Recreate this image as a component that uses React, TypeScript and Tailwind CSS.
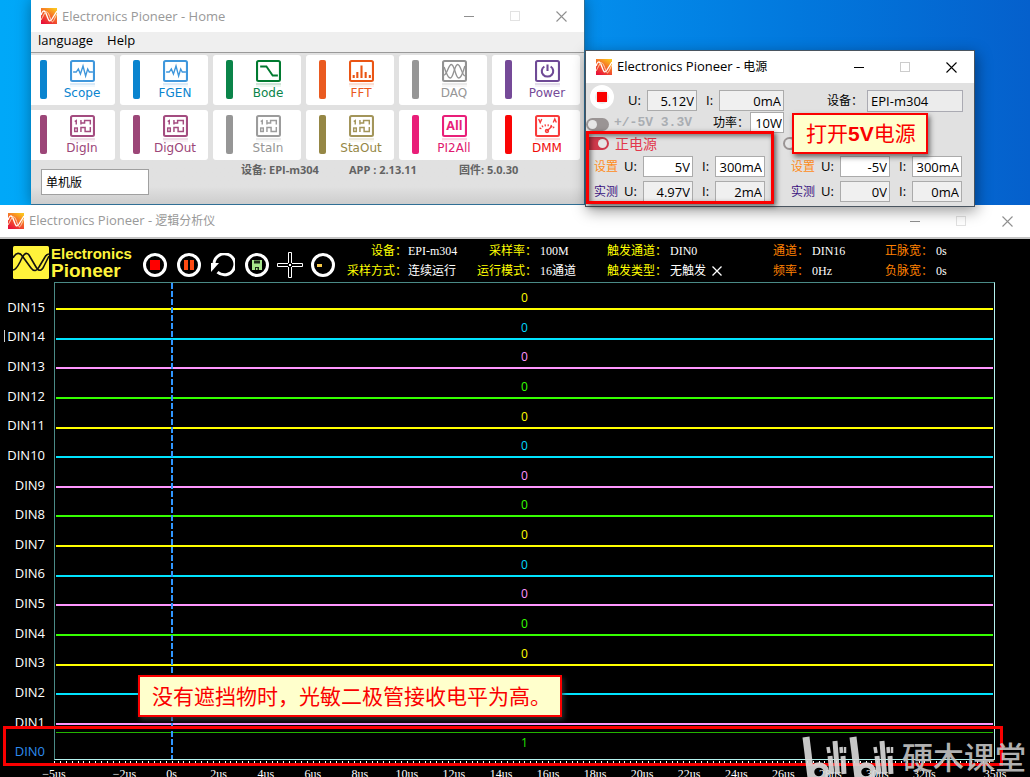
import type { ReactNode } from "react";

const UI = "font-['Open_Sans','Noto_Sans_CJK_SC',sans-serif]";
const BITMAP = "font-['Liberation_Serif','Noto_Sans_CJK_SC',serif]";

function AppIcon() {
  return (
    <svg width="16" height="16" viewBox="0 0 16 16" aria-hidden="true">
      <defs>
        <linearGradient id="appGradient" x1="0.8" y1="0" x2="0.2" y2="1">
          <stop offset="0" stopColor="#fcc41c" />
          <stop offset="0.5" stopColor="#f4622a" />
          <stop offset="1" stopColor="#e8103a" />
        </linearGradient>
      </defs>
      <rect width="16" height="16" fill="url(#appGradient)" />
      <path d="M0 7 C2 1 4 2 6 8 S9 14 11 11 L16 3" fill="none" stroke="#fff" strokeWidth="1.3" />
      <path d="M0 12 C2 9 3 5 5 4 S8 7 10 12 S13 11 16 6" fill="none" stroke="#ffd9b8" strokeWidth="1" />
    </svg>
  );
}

function WindowButtons({ muted }: { muted?: boolean }) {
  const tone = muted ? "text-[#8f8f8f]" : "text-black";
  return (
    <div className={`flex ${tone}`}>
      <button type="button" aria-label="Minimize" className="flex h-8 w-[46px] items-center justify-center">
        <svg width="11" height="11" viewBox="0 0 11 11"><path d="M0 5.5H10" stroke="currentColor" /></svg>
      </button>
      <button type="button" aria-label="Maximize" className="flex h-8 w-[46px] items-center justify-center">
        <svg width="11" height="11" viewBox="0 0 11 11"><rect x="0.5" y="0.5" width="9" height="9" fill="none" stroke={muted ? "#e2e2e2" : "#cccccc"} /></svg>
      </button>
      <button type="button" aria-label="Close" className="flex h-8 w-[46px] items-center justify-center">
        <svg width="11" height="11" viewBox="0 0 11 11"><path d="M0.5 0.5L10.5 10.5M10.5 0.5L0.5 10.5" stroke="currentColor" strokeWidth="1.1" /></svg>
      </button>
    </div>
  );
}

function TitleBar({ title, local, muted, inset }: { title: string; local?: string; muted?: boolean; inset: string }) {
  return (
    <header className={`flex h-8 shrink-0 items-center justify-between bg-white ${inset}`}>
      <div className="flex items-center gap-[5px]">
        <AppIcon />
        <h1 className={`pb-px text-[13px] leading-4 whitespace-nowrap ${muted ? "text-[#999999]" : "text-black"}`}>
          {title}
          {local && <span className="text-[12px]"> {local}</span>}
        </h1>
      </div>
      <WindowButtons muted={muted} />
    </header>
  );
}

const glyphs: Record<string, ReactNode> = {
  wave: <path d="M3 12H6L8 9L10 14L12.5 6L15 16L17 9L18.5 12H22" strokeWidth="1.3" />,
  bode: <path d="M4 6.5H10L16 15.5H21" strokeWidth="1.8" />,
  fft: <path d="M4.5 18V15M8 18V12M12 18V5.5M16 18V12M20 18V15" strokeWidth="2" />,
  daq: (
    <g strokeWidth="1.3">
      <path d="M2 15C5 15 6 4.500 9 4.500S13 18 16 18S20 12 22 6" />
      <path d="M2 7C4 12 5 18 8 18S12 4.500 15 4.500S19 15 22 16" />
    </g>
  ),
  power: (
    <g strokeWidth="2">
      <path d="M9 6.500A5.500 5.500 0 1 0 15 6.500" />
      <path d="M12 4.500V11" />
    </g>
  ),
  logic: (
    <g strokeWidth="1.4">
      <path d="M4.500 6.500L6 5.500V9.500M10.500 5V9.500M10.500 8H14V5.500H19.500V9.500M10.500 17V12.500H14.500V16.500H19.500V12" />
      <rect x="4.500" y="13" width="2.500" height="3.500" />
    </g>
  ),
  dmm: (
    <g strokeWidth="1.3">
      <path d="M3.500 4L5 7.500L6.500 4M17.500 7.500L19 4L20.500 7.500" />
      <path d="M5 14C7 9 16 9 19 14" strokeWidth="2" strokeDasharray="1.200 1.600" />
      <path d="M11 16.500L16.500 11" />
      <circle cx="11.500" cy="16" r="1.500" />
    </g>
  ),
};

interface Tool { name: string; glyph: string; color: string; bar: string; text: string }

const tools: Tool[] = [
  { name: "Scope", glyph: "wave", color: "#3f97dc", bar: "bg-[#0a84cf]", text: "text-[#0a84cf]" },
  { name: "FGEN", glyph: "wave", color: "#3f97dc", bar: "bg-[#0a84cf]", text: "text-[#0a84cf]" },
  { name: "Bode", glyph: "bode", color: "#007a30", bar: "bg-[#0a8449]", text: "text-[#0a8449]" },
  { name: "FFT", glyph: "fft", color: "#ea5514", bar: "bg-[#ea5a20]", text: "text-[#ea5a20]" },
  { name: "DAQ", glyph: "daq", color: "#929292", bar: "bg-[#969696]", text: "text-[#969696]" },
  { name: "Power", glyph: "power", color: "#6f4a96", bar: "bg-[#754a98]", text: "text-[#754a98]" },
  { name: "DigIn", glyph: "logic", color: "#a44c80", bar: "bg-[#9c4678]", text: "text-[#9c4678]" },
  { name: "DigOut", glyph: "logic", color: "#a44c80", bar: "bg-[#9c4678]", text: "text-[#9c4678]" },
  { name: "StaIn", glyph: "logic", color: "#9c9c9c", bar: "bg-[#969696]", text: "text-[#969696]" },
  { name: "StaOut", glyph: "logic", color: "#a3955a", bar: "bg-[#958745]", text: "text-[#958745]" },
  { name: "PI2All", glyph: "all", color: "#e91e79", bar: "bg-[#e91e79]", text: "text-[#e0186f]" },
  { name: "DMM", glyph: "dmm", color: "#f83a3a", bar: "bg-[#fa0505]", text: "text-[#f00a0a]" },
];

function ToolTile({ tool }: { tool: Tool }) {
  return (
    <button type="button" className="flex h-[50px] items-start rounded-[3px] bg-white pt-[5px] pl-[13px]">
      <span className={`h-[39px] w-[7px] shrink-0 rounded-[2px] ${tool.bar}`} />
      <span className="flex flex-1 flex-col items-center pl-[2px]">
        <svg width="25" height="28" viewBox="0 0 24 28" preserveAspectRatio="none" fill="none" stroke={tool.color} aria-hidden="true">
          <rect x="1" y="1" width="22" height="20" rx="1.500" strokeWidth="2" />
          {tool.glyph === "all" ? (
            <text x="12" y="15.500" textAnchor="middle" fontSize="12" fontWeight="700" fontFamily="Open Sans, sans-serif" fill={tool.color} stroke="none">All</text>
          ) : (
            glyphs[tool.glyph]
          )}
          <rect x="0" y="23" width="24" height="2" fill={tool.color} stroke="none" opacity="0.2" />
          <rect x="0" y="25" width="24" height="2" fill={tool.color} stroke="none" opacity="0.07" />
        </svg>
        <span className={`-mt-[2px] font-['DejaVu_Sans',sans-serif] text-[12px] leading-[15px] ${tool.text}`}>{tool.name}</span>
      </span>
    </button>
  );
}

function HomeWindow() {
  return (
    <section aria-label="Home" className="absolute top-0 left-[31px] h-[205px] w-[554px] overflow-hidden border-r border-b border-[#2f6f95] bg-[#e1e1e1] shadow-[0_0_14px_rgba(0,0,0,0.35)]">
      <TitleBar title="Electronics Pioneer - Home" muted inset="pl-[10px]" />
      <nav className="flex h-[21px] items-start gap-[14px] border-b border-[#9a9a9a] bg-[#efefef] px-[7px] text-[13px] leading-4 text-black">
        <button type="button">language</button>
        <button type="button">Help</button>
      </nav>
      <div className="mt-[2px] mr-1 -ml-1 grid grid-cols-6 gap-[5px]">
        {tools.map((tool) => (
          <ToolTile key={tool.name} tool={tool} />
        ))}
      </div>
      <div className="flex h-11 items-start bg-linear-to-b from-[#e1e1e1] from-60% to-[#cdcdcd] pl-[10px]">
        <input aria-label="Edition" defaultValue="单机版" className="mt-[9px] h-[26px] w-[108px] border border-[#a0a0a0] bg-white px-1 text-[12px] text-black" />
        <p className="ml-[92px] flex gap-[30px] pt-[2px] text-[11px] leading-4 font-bold whitespace-nowrap text-[#636363]">
          <span>设备: EPI-m304</span>
          <span>APP : 2.13.11</span>
          <span className="ml-3">固件: 5.0.30</span>
        </p>
      </div>
    </section>
  );
}

function Reading({ id, label, value, width, editable }: { id: string; label: string; value: string; width: string; editable?: boolean }) {
  return (
    <div className="flex items-center gap-[6px]">
      <label htmlFor={id} className="text-[13px] whitespace-nowrap">{label}</label>
      <input id={id} defaultValue={value} readOnly={!editable} className={`h-[21px] border border-[#ababab] pr-[2px] text-right text-[13px] ${width} ${editable ? "bg-white" : "bg-[#f0f0f0]"}`} />
    </div>
  );
}

function Toggle({ id, on }: { id: string; on?: boolean }) {
  return (
    <input
      id={id}
      type="checkbox"
      defaultChecked={on}
      className="flex h-[13px] w-[23px] appearance-none items-center rounded-full bg-[#9a9494] px-[2px] before:size-[9px] before:rounded-full before:bg-[#e6e6e6] checked:justify-end checked:rounded-l-none checked:bg-[#cf3a4c]"
    />
  );
}

function Supply({ id, name, on, rows }: { id: string; name?: string; on?: boolean; rows: string[][] }) {
  return (
    <fieldset className="w-[197px] shrink-0">
      <div className="flex h-[21px] items-center gap-[6px]">
        <Toggle id={id} on={on} />
        {name && <label htmlFor={id} className="text-[14px] leading-4 text-[#e2384c]">{name}</label>}
      </div>
      <div className="mt-[2px] flex flex-col gap-1 pl-2">
        {rows.map(([label, volts, amps], i) => (
          <div key={label} className="flex items-center">
            <span className={`mr-[6px] text-[12px] ${i === 0 ? "text-[#ff8c1a]" : "text-[#3a1280]"}`}>{label}</span>
            <div className="w-[78px]"><Reading id={`${id}-u${i}`} label="U:" value={volts} width="w-[50px]" editable={i === 0} /></div>
            <Reading id={`${id}-i${i}`} label="I:" value={amps} width="w-[50px]" editable={i === 0} />
          </div>
        ))}
      </div>
    </fieldset>
  );
}

function Callout({ children, place }: { children: ReactNode; place: string }) {
  return (
    <p className={`absolute flex items-center border-2 border-[#fa0000] bg-[#ffffcc] px-3 font-['Liberation_Sans','Noto_Sans_CJK_SC',sans-serif] text-[21px] leading-none whitespace-nowrap text-[#fa0000] shadow-[2px_3px_5px_rgba(60,60,60,0.7)] ${place}`}>
      {children}
    </p>
  );
}

function PowerWindow() {
  return (
    <section aria-label="电源" className="absolute top-[50px] left-[585px] h-[157px] w-[390px] border border-[#4a5560] bg-[#e1e1e1] text-black shadow-[2px_4px_14px_rgba(0,0,0,0.4)]">
      <TitleBar title="Electronics Pioneer -" local="电源" inset="pl-[10px]" />
      <div className="flex items-start pt-[2px] pl-1">
        <button type="button" aria-label="Stop" className="flex size-6 items-center justify-center rounded-full border-[5px] border-white bg-[#ececec]">
          <span className="size-[10px] shrink-0 bg-[#fa0000]" />
        </button>
        <div className="mt-[5px] ml-[14px] flex">
          <div className="w-[78px]"><Reading id="in-u" label="U:" value="5.12V" width="w-[50px]" /></div>
          <Reading id="in-i" label="I:" value="0mA" width="w-[65px]" />
        </div>
        <div className="mt-[5px] ml-[43px] flex items-center gap-1">
          <label htmlFor="device" className="text-[12px] whitespace-nowrap">设备：</label>
          <input id="device" readOnly defaultValue="EPI-m304" className="h-[22px] w-24 border border-[#aaaab2] bg-[#ececec] px-[3px] text-[13px]" />
        </div>
      </div>
      <div className="flex h-[21px] items-center">
        <span className="pt-1"><Toggle id="rail" /></span>
        <label htmlFor="rail" className="ml-[5px] font-['Liberation_Mono',monospace] text-[13px] font-bold whitespace-nowrap text-[#a9adb2]">+/-5V 3.3V</label>
        <label htmlFor="watts" className="ml-[21px] text-[12px] whitespace-nowrap">功率：</label>
        <input id="watts" defaultValue="10W" className="ml-px h-[21px] w-[34px] border border-[#ababab] bg-white pr-px text-right text-[13px]" />
      </div>
      <div className="flex">
        <Supply id="positive" name="正电源" on rows={[["设置", "5V", "300mA"], ["实测", "4.97V", "2mA"]]} />
        <Supply id="negative" rows={[["设置", "-5V", "300mA"], ["实测", "0V", "0mA"]]} />
      </div>
      <div className="pointer-events-none absolute top-[80px] left-0 h-[73px] w-[188px] border-[3px] border-[#fa0000] shadow-[2px_2px_5px_rgba(0,0,0,0.6),inset_2px_2px_5px_rgba(0,0,0,0.5)]" />
      <Callout place="top-[62px] left-[206px] h-[41px] w-[136px]">打开<b>5V</b>电源</Callout>
    </section>
  );
}

function Brand() {
  return (
    <div className="flex items-center gap-[2px] text-[#fff33b]">
      <svg width="36" height="33" viewBox="0 0 36 33" aria-hidden="true">
        <rect width="36" height="33" rx="1.500" fill="#fff33b" />
        <g fill="none" stroke="#111" strokeWidth="1.600">
          <path d="M0 12C3 6 7 6 10 11L18 22C21 26 24 25 26 21L32 11C33 9 35 8 36 8" />
          <path d="M0 24C3 24 5 20 7 16C10 9 13 5 16 9L23 21C26 26 29 25 31 20L36 10" />
        </g>
      </svg>
      <div className="w-[80px] font-['Liberation_Sans',sans-serif] font-bold whitespace-nowrap">
        <div className="text-[15px] leading-4">Electronics</div>
        <div className="text-[19px] leading-[17px]">Pioneer</div>
      </div>
    </div>
  );
}

function RoundButton({ label, children }: { label: string; children: ReactNode }) {
  return (
    <button type="button" aria-label={label}>
      <svg width="24" height="24" viewBox="0 0 24 24" fill="none">{children}</svg>
    </button>
  );
}

function Toolbar() {
  const ring = <circle cx="12" cy="12" r="10.500" stroke="#fff" strokeWidth="3" />;
  return (
    <div className="flex items-center gap-[10px]">
      <RoundButton label="Stop">{ring}<rect x="7" y="7" width="10" height="10" fill="#ff0000" /></RoundButton>
      <RoundButton label="Pause">{ring}<path d="M7 7H11V17H7ZM13 7H17V17H13Z" fill="#ff4a12" /></RoundButton>
      <RoundButton label="Repeat">
        <path d="M6.500 19.200A10.500 10.500 0 1 0 3 10" stroke="#fff" strokeWidth="3" />
        <path d="M-1 10H8L0 19Z" fill="#fff" />
      </RoundButton>
      <RoundButton label="Save">
        {ring}
        <path d="M7 7H17V17H7Z" fill="#a5e58a" />
        <path d="M9 7.500H15V10.500H9ZM10 14H14V17H10Z" fill="#1c2b18" />
        <path d="M11 15H12.500V17H11Z" fill="#a5e58a" />
      </RoundButton>
      <button type="button" aria-label="Cursor" className="-mx-[2px]">
        <svg width="26" height="26" viewBox="0 0 26 26" fill="none">
          <path d="M11.500 .5H14.500V11.500H25.500V14.500H14.500V25.500H11.500V14.500H.5V11.500H11.500Z" stroke="#fff" />
          <rect x="11" y="11" width="4" height="4" fill="#000" />
          <rect x="12" y="12" width="2" height="2" fill="#fff" />
        </svg>
      </button>
      <RoundButton label="Zoom out">{ring}<rect x="6" y="11" width="5" height="3" fill="#f7c948" /></RoundButton>
    </div>
  );
}

function Info({ items, tone, labelWidth, place, gap = "gap-[3px]" }: { items: [string, string][]; tone: string; labelWidth: string; place: string; gap?: string }) {
  return (
    <dl className={`text-[12px] leading-5 whitespace-nowrap text-white ${place}`}>
      {items.map(([label, value]) => (
        <div key={label} className={`flex ${gap}`}>
          <dt className={`text-right ${tone} ${labelWidth}`}>{label}</dt>
          <dd className="flex items-center">{value}
            {value === "无触发" && <svg className="ml-[6px]" width="10" height="10" viewBox="0 0 10 10"><path d="M.5 .5L9.500 9.500M9.500 .5L.5 9.500" stroke="#fff" strokeWidth="1.300" /></svg>}
          </dd>
        </div>
      ))}
    </dl>
  );
}

const palette = [
  { line: "border-[#ffff00]", text: "text-[#ffff00]" },
  { line: "border-[#00e4ff]", text: "text-[#00d8ff]" },
  { line: "border-[#ff96ff]", text: "text-[#ff96ff]" },
  { line: "border-[#36ff00]", text: "text-[#36ff00]" },
];

const channels = Array.from({ length: 16 }, (_, i) => 15 - i);
const marks = [-5, -2, 0, 2, 4, 6, 8, 10, 12, 14, 16, 18, 20, 22, 24, 26, 28, 30, 32, 35];

function LogicWindow() {
  return (
    <section aria-label="逻辑分析仪" className="absolute inset-x-0 top-[205px] bottom-0 flex flex-col overflow-hidden bg-black">
      <TitleBar title="Electronics Pioneer -" local="逻辑分析仪" muted inset="pl-2" />
      <div className="h-[2px] shrink-0 bg-[#c4c4c4]" />
      <div className={`flex h-[43px] shrink-0 items-center pl-[13px] ${BITMAP}`}>
        <div className="pt-[3px]"><Brand /></div>
        <div className="ml-3 pt-2"><Toolbar /></div>
        <Info place="ml-[12px] w-[130px]" gap="gap-px" labelWidth="w-[60px]" tone="text-[#ffff00]" items={[["设备：", "EPI-m304"], ["采样方式：", "连续运行"]]} />
        <Info place="w-[130px]" labelWidth="w-[60px]" tone="text-[#ffff00]" items={[["采样率：", "100M"], ["运行模式：", "16通道"]]} />
        <Info place="w-[166px]" labelWidth="w-[60px]" tone="text-[#ffff00]" items={[["触发通道：", "DIN0"], ["触发类型：", "无触发"]]} />
        <Info place="w-[112px]" labelWidth="w-[36px]" tone="text-[#ff8000]" items={[["通道：", "DIN16"], ["频率：", "0Hz"]]} />
        <Info place="" labelWidth="w-[48px]" tone="text-[#ff8000]" items={[["正脉宽：", "0s"], ["负脉宽：", "0s"]]} />
      </div>
      <div className="flex min-h-0 flex-1 pr-[35px]">
        <div className="flex w-[54px] shrink-0 flex-col pt-[10px] pr-[9px] pb-[11px] text-right text-[13px] text-white">
          {channels.map((n) => (
            <div key={n} className={`flex min-h-0 flex-1 items-center justify-between ${n === 0 ? "text-[#2d8cf0]" : ""}`}>
              <span className={`ml-1 h-3 w-px ${n === 14 ? "bg-[#cccccc]" : ""}`} />
              <span className="leading-4">DIN{n}</span>
            </div>
          ))}
        </div>
        <div className="flex flex-1 flex-col">
          <div className="relative grid min-h-0 flex-1 grid-rows-[27px_repeat(14,minmax(0,1fr))_34px] border border-t-[#4a8a86] border-r-[#b4f2ee] border-b-[#b4f2ee] border-l-[#4a8a86] px-px">
            <div className="absolute inset-y-0 left-[12.5%] w-[2px] -translate-x-1/2 bg-[repeating-linear-gradient(180deg,#2f96ff_0_6px,transparent_6px_8px)]" />
            {channels.map((n, i) =>
              n > 0 ? (
                <div key={n} className={`flex min-h-0 items-end justify-center border-b-2 pb-[2px] text-[12px] leading-4 ${palette[i % 4].line} ${palette[i % 4].text}`}>
                  {n > 2 ? "0" : ""}
                </div>
              ) : (
                <div key={n} className="mt-[7px] flex items-start justify-center border-t border-[#22b400] pt-[2px] text-[12px] leading-4 text-[#22e000]">1</div>
              ),
            )}
          </div>
          <div className={`relative h-[17px] shrink-0 text-[12px] text-white ${BITMAP}`}>
            <div className="mt-px h-[2px] bg-[repeating-linear-gradient(90deg,#fff_0_1px,transparent_1px_0.625%)]" />
            {marks.map((us) => (
              <span key={us} className="absolute top-[7px] -translate-x-1/2 leading-[14px]" style={{ left: `${((us + 5) / 40) * 100}%` }}>
                {us === 0 ? "0s" : `${us < 0 ? "−" : ""}${Math.abs(us)}us`}
              </span>
            ))}
          </div>
        </div>
      </div>
      <div className="pointer-events-none absolute right-[27px] bottom-[11px] left-[3px] h-10 border-[3px] border-[#fa0000]" />
      <Callout place="bottom-[60px] left-[138px] h-[42px] w-[424px]">没有遮挡物时，光敏二极管接收电平为高。</Callout>
      <Watermark />
    </section>
  );
}

function Half({ x }: { x: number }) {
  return (
    <g transform={`translate(${x} 0)`} stroke="#dcdcdc" fill="none">
      <line x1="4" y1="1" x2="9" y2="42" strokeWidth="7" />
      <ellipse cx="17" cy="36" rx="7.500" ry="7" strokeWidth="5.500" />
      <line x1="26" y1="11" x2="27" y2="17" strokeWidth="3.500" />
      <line x1="28" y1="20" x2="30" y2="38" strokeWidth="5" />
      <line x1="33" y1="5" x2="35.500" y2="38" strokeWidth="5" />
      <line x1="39" y1="11" x2="39.500" y2="17" strokeWidth="3.500" />
      <line x1="43" y1="11" x2="43" y2="17" strokeWidth="2.500" />
      <line x1="41" y1="20" x2="42" y2="38" strokeWidth="5" />
    </g>
  );
}

function Watermark() {
  return (
    <div className="pointer-events-none absolute right-1 bottom-0 flex items-start gap-[7px] opacity-90">
      <svg width="93" height="41" viewBox="0 0 93 41" role="img" aria-label="bilibili">
        <Half x={0} />
        <Half x={47} />
      </svg>
      <span className="pt-1 font-['Noto_Sans_CJK_SC',sans-serif] text-[31px] leading-8 font-medium whitespace-nowrap text-[#c4c4c4]">硬木课堂</span>
    </div>
  );
}

export default function App() {
  return (
    <main className={`relative h-screen min-h-[640px] overflow-hidden bg-linear-to-r from-[#00a8f8] via-[#0490ee] via-55% to-[#0560cc] ${UI}`}>
      <HomeWindow />
      <LogicWindow />
      <PowerWindow />
    </main>
  );
}
